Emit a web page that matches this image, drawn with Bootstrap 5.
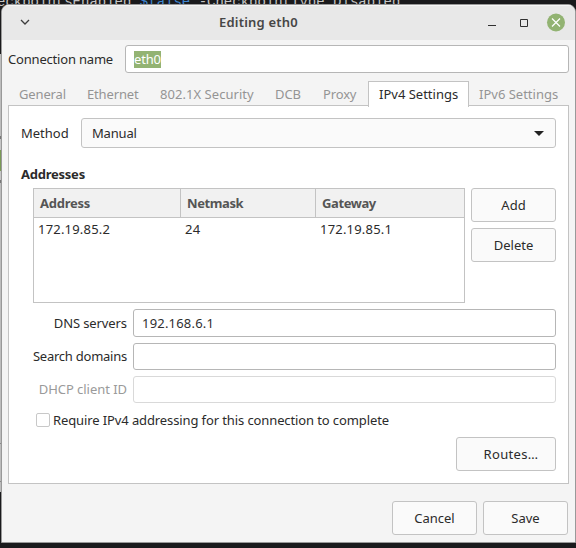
<!DOCTYPE html>
<html lang="en">
<head>
<meta charset="utf-8">
<title>Editing eth0</title>
<link href="https://cdn.jsdelivr.net/npm/bootstrap@5.3.0/dist/css/bootstrap.min.css" rel="stylesheet">
<style>
html, body { height: 548px; overflow: hidden; }
body { background: #1a1a1c; font-family: "Noto Sans", "Open Sans", sans-serif; font-size: 13px; line-height: 18px; color: #2b2b2b; letter-spacing: -.19px; padding: 4px 0 0 1px; position: relative; }
.term { position: absolute; left: -3px; top: -6px; font: 14px/16px "Liberation Mono", monospace; color: #c4c4c4; letter-spacing: 0; white-space: pre; }
.term b { color: #3f86cf; font-weight: 400; }
.edge { position: absolute; left: 0; top: 54px; width: 3px; height: 438px; background: linear-gradient(#bdbdbd 0 82px, #777 82px 85px, #c6c6c6 85px 96px, #7a9a56 96px 117px, #c6c6c6 117px 126px, #777 126px 129px, #bdbdbd 129px 389px, #888 389px 390px, #bdbdbd 390px 427px, #888 427px 428px, #bdbdbd 428px); }
.win { position: relative; width: 575px; height: 539px; background: #f4f4f4; border: 1px solid #999; border-radius: 8px 8px 0 0; overflow: hidden; }
.titlebar { height: 35px; background: #e8e8e8; font-weight: 600; color: #464646; box-shadow: inset 0 1px #f6f6f6; padding: 0 10px 0 17px; }
.titlebar .caption { width: 79px; margin-left: 188px; letter-spacing: .2px; margin-top: -1px; }
.entry { height: 28px; background: #fff; border: 1px solid #b6b6b6; border-radius: 3px; padding: 0 8px; color: #303030; }
.conn { padding: 5px 6px 0 6px; }
.conn label { width: 117px; }
.sel { background: #93b373; color: #fff; height: 17px; line-height: 17px; margin-top: 1px; }
.tabs { height: 33px; padding: 8px 0 0 6px; color: #949494; position: relative; z-index: 1; }
.tabs > div { height: 25px; padding-left: 11px; padding-top: 4px; white-space: nowrap; letter-spacing: -.06px; }
.tabs > .t1, .tabs > .t2, .tabs > .t5 { letter-spacing: -.15px; }
.tabs > .t3 { letter-spacing: .05px; }
.tabs .on { height: 26px; background: #fff; border: 1px solid #c3c3c3; border-bottom: 0; color: #2b2b2b; padding-left: 10px; padding-top: 3px; }
.t1 { width: 68px; } .t2 { width: 73px; } .t3 { width: 115px; } .t4 { width: 48px; } .t5 { width: 56px; } .t6 { width: 101px; }
.tabs > .t6, .tabs > .t7 { letter-spacing: 0; }
.tabs > .t7 { padding-left: 10px; }
.pane { width: 561px; height: 379px; margin: -1px 0 0 6px; background: #fff; border: 1px solid #c3c3c3; padding: 12px 12px 0; }
.combo { height: 30px; background: #fafafa; border: 1px solid #c3c3c3; border-radius: 3px; padding: 0 11px 0 10px; }
.mlabel { width: 60px; letter-spacing: 0; }
.heading { margin: 17px 0 5px; font-weight: 700; letter-spacing: -.24px; }
.tree { width: 432px; height: 115px; border: 1px solid #c3c3c3; margin-left: 12px; }
.thead-row { height: 29px; background: #f1f1f1; border-bottom: 1px solid #c3c3c3; font-weight: 700; color: #555; letter-spacing: -.4px; }
.thead-row > div { height: 28px; padding: 5px 0 0 6px; border-right: 1px solid #c3c3c3; }
.thead-row > div:first-child { letter-spacing: -.25px; }
.thead-row > div:last-child { border: 0; }
.trow > div { padding: 2px 0 0 4px; }
.c1 { width: 147px; } .c2 { width: 135px; }
.num { letter-spacing: .2px; }
.gbtn { width: 85px; height: 34px; background: #fafafa; border: 1px solid #c3c3c3; border-radius: 3px; padding: 0; font-size: 13px; line-height: 18px; color: #2b2b2b; letter-spacing: 0; }
.flabel { width: 106px; margin-right: 6px; letter-spacing: -.1px; }
.low { height: 27px; }
.low-row .flabel { margin-top: -2px; }
.off { border-color: #d9d9d9; }
.tick { width: 14px; height: 14px; border: 1px solid #c8c8c8; border-radius: 2px; margin: 0 3px 0 15px; }
.require { letter-spacing: -.11px; }
.wide { width: 100px; padding-left: 10px; letter-spacing: .35px; }
.foot { padding: 17px 7px 0 0; gap: 6px; }
</style>
<script src="https://cdn.jsdelivr.net/npm/bootstrap@5.3.0/dist/js/bootstrap.bundle.min.js"></script>
</head>
<body>
<div class="term">eckpointsEnabled <b>$false</b> -CheckpointType Disabled</div>
<div class="edge"></div>
<main class="win">
  <header class="titlebar d-flex align-items-center">
    <svg width="12" height="10" viewBox="0 0 12 10" fill="none" stroke="#3c3c3c" stroke-width="1.3"><path d="M2 2l4 4 4-4"/></svg>
    <div class="caption text-nowrap">Editing eth0</div>
    <svg class="ms-auto" width="80" height="20" viewBox="0 0 80 20" fill="none"><path d="M3 12.5h8" stroke="#303030"/><path d="M35.500 6.500h7v7h-7z" stroke="#303030"/><circle cx="71" cy="9.500" r="9" fill="#92b372"/><path d="M67 5.500l8 8m0-8l-8 8" stroke="#fff" stroke-width="1.2"/></svg>
  </header>
  <div class="conn d-flex align-items-center">
    <label>Connection name</label>
    <div class="entry flex-fill d-flex align-items-center"><span class="sel">eth0</span></div>
  </div>
  <nav class="tabs d-flex">
    <div class="t1">General</div><div class="t2">Ethernet</div><div class="t3">802.1X Security</div><div class="t4">DCB</div><div class="t5">Proxy</div><div class="t6 on">IPv4 Settings</div><div class="t7">IPv6 Settings</div>
  </nav>
  <section class="pane">
    <div class="d-flex align-items-center">
      <label class="mlabel">Method</label>
      <div class="combo flex-fill d-flex align-items-center justify-content-between"><span>Manual</span><svg width="10" height="5" viewBox="0 0 10 5"><path d="M0 0h10L5 5z" fill="#222"/></svg></div>
    </div>
    <div class="heading">Addresses</div>
    <div class="d-flex justify-content-between">
      <div class="tree">
        <div class="thead-row d-flex"><div class="c1">Address</div><div class="c2">Netmask</div><div>Gateway</div></div>
        <div class="trow num d-flex"><div class="c1">172.19.85.2</div><div class="c2">24</div><div>172.19.85.1</div></div>
      </div>
      <div class="d-flex flex-column" style="gap:6px"><button class="btn gbtn">Add</button><button class="btn gbtn">Delete</button></div>
    </div>
    <div class="d-grid" style="gap:6px;margin-top:6px">
      <div class="d-flex align-items-center"><label class="flabel text-end">DNS servers</label><div class="entry num flex-fill d-flex align-items-center">192.168.6.1</div></div>
      <div class="low-row d-flex align-items-center"><label class="flabel text-end" style="letter-spacing:-.24px">Search domains</label><div class="entry low flex-fill"></div></div>
      <div class="low-row d-flex align-items-center"><label class="flabel text-end" style="color:#9a9a9a;letter-spacing:-.04px">DHCP client ID</label><div class="entry low off flex-fill"></div></div>
    </div>
    <div class="d-flex align-items-center" style="margin-top:8px"><span class="tick"></span><span class="require">Require IPv4 addressing for this connection to complete</span></div>
    <div class="d-flex justify-content-end" style="margin-top:8px"><button class="btn gbtn wide">Routes…</button></div>
  </section>
  <footer class="foot d-flex justify-content-end"><button class="btn gbtn">Cancel</button><button class="btn gbtn">Save</button></footer>
</main>
</body>
</html>
